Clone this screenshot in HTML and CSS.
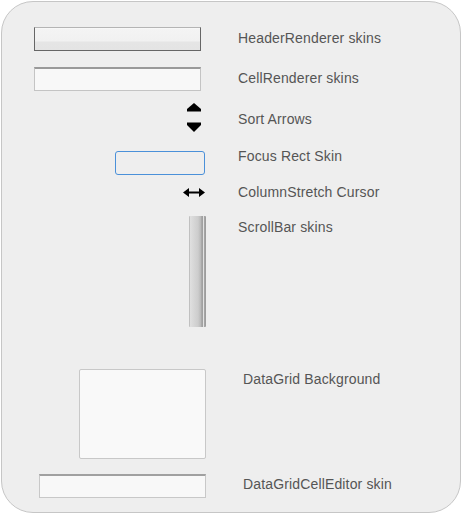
FILE: index.html
```html
<!DOCTYPE html>
<html>
<head>
<meta charset="utf-8">
<link rel="stylesheet" href="styles.css">
</head>
<body>
<div class="panel">
  <div class="row row-header">
    <div class="skin"><div class="header-skin"></div></div>
    <div class="label">HeaderRenderer skins</div>
  </div>
  <div class="row row-cell">
    <div class="skin"><div class="cell-skin"></div></div>
    <div class="label">CellRenderer skins</div>
  </div>
  <div class="row row-sort">
    <div class="skin">
      <svg class="sort-arrows" width="16" height="29" viewBox="0 0 16 29">
        <polygon points="8,0 15,6 15,8.5 1,8.5 1,6" fill="#000"/>
        <polygon points="1,19.5 15,19.5 15,22 8,29 1,22" fill="#000"/>
      </svg>
    </div>
    <div class="label label-sort">Sort Arrows</div>
  </div>
  <div class="row row-focus">
    <div class="skin"><div class="focus-skin"></div></div>
    <div class="label label-focus">Focus Rect Skin</div>
  </div>
  <div class="row row-stretch">
    <div class="skin">
      <svg class="stretch-cursor" width="22" height="9" viewBox="0 0 22 9">
        <polygon points="0,4.5 6,0 6,3.5 16,3.5 16,0 22,4.5 16,9 16,5.5 6,5.5 6,9" fill="#000"/>
      </svg>
    </div>
    <div class="label label-stretch">ColumnStretch Cursor</div>
  </div>
  <div class="row row-scroll">
    <div class="skin"><div class="scroll-skin"></div></div>
    <div class="label label-scroll">ScrollBar skins</div>
  </div>
  <div class="row row-bg">
    <div class="skin"><div class="bg-skin"></div></div>
    <div class="label label-wide">DataGrid Background</div>
  </div>
  <div class="row row-editor">
    <div class="skin"><div class="editor-skin"></div></div>
    <div class="label label-wide">DataGridCellEditor skin</div>
  </div>
</div>
</body>
</html>
```
FILE: styles.css
```css
html, body {
  margin: 0;
  padding: 0;
  background: #ffffff;
}
body {
  font-family: "Liberation Sans", Arial, sans-serif;
}
.panel {
  box-sizing: border-box;
  margin: 1px 0 0 1px;
  width: 460px;
  height: 512px;
  border: 1px solid #c6c6c6;
  border-radius: 32px;
  background: #eeeeee;
  padding-top: 25px;
  display: flex;
  flex-direction: column;
}
.row {
  display: flex;
  align-items: flex-start;
}
.skin {
  width: 204px;
  flex: none;
  display: flex;
  justify-content: flex-end;
}
.label {
  margin-left: 32px;
  margin-top: 3px;
  font-size: 14px;
  line-height: 16px;
  letter-spacing: 0.15px;
  color: #555555;
  white-space: nowrap;
}
.label-wide {
  margin-left: 37px;
  margin-top: 2px;
}

/* Header renderer */
.header-skin {
  box-sizing: border-box;
  width: 167px;
  height: 24px;
  margin-right: 5px;
  border: 1px solid #666666;
  border-top-color: #b4b4b4;
  background: linear-gradient(to bottom, #fbfbfb 0, #f4f4f4 1px, #f1f1f1 13px, #e5e5e5 14px, #e4e4e4 100%);
}

/* Cell renderer */
.row-cell { margin-top: 16px; }
.cell-skin {
  box-sizing: border-box;
  width: 167px;
  height: 24px;
  margin-right: 5px;
  border: 1px solid #c4c4c4;
  border-top: 2px solid #999999;
  background: #f8f8f8;
}

/* Sort arrows */
.row-sort { margin-top: 12px; }
.sort-arrows {
  display: block;
  margin-right: 4px;
}
.label-sort { margin-top: 8px; }

/* Focus rect */
.row-focus { margin-top: 15px; }
.focus-skin {
  box-sizing: border-box;
  width: 90px;
  height: 24px;
  margin-top: 4px;
  margin-right: 1px;
  border: 1px solid #4a90d9;
  border-radius: 3px;
}
.label-focus { margin-top: 1px; }

/* Column stretch cursor */
.row-stretch { margin-top: 9px; }
.stretch-cursor {
  display: block;
  margin-top: 4px;
  margin-right: 1px;
}
.label-stretch { margin-top: 0; }

/* Scrollbar */
.row-scroll { margin-top: 16px; }
.scroll-skin {
  width: 17px;
  height: 111px;
  border-radius: 1px;
  background: linear-gradient(to right,
    #c0c0c0 0, #c0c0c0 1px,
    #e0e0e0 1px, #d6d6d6 5px, #cdcdcd 9px, #b8b8b8 12px,
    #9a9a9a 13px, #a6a6a6 14px,
    #e2e2e2 14px, #e2e2e2 15px,
    #a9a9a9 15px, #999999 17px);
}
.label-scroll { margin-top: 3px; }

/* DataGrid background */
.row-bg { margin-top: 42px; }
.bg-skin {
  box-sizing: border-box;
  width: 127px;
  height: 90px;
  border: 1px solid #c8c8c8;
  border-radius: 2px;
  background: #f9f9f9;
}

/* Cell editor */
.row-editor { margin-top: 15px; }
.editor-skin {
  box-sizing: border-box;
  width: 167px;
  height: 24px;
  border: 1px solid #c8c8c8;
  border-top: 2px solid #a0a0a0;
  background: #f8f8f8;
}
```
